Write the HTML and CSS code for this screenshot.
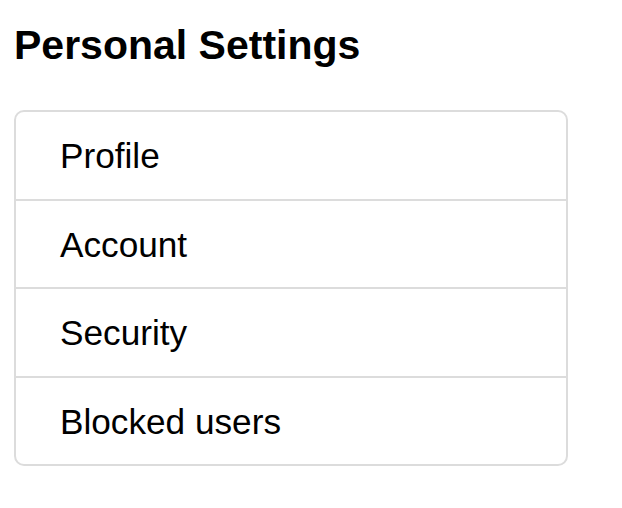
FILE: index.html
```html
<!DOCTYPE html>
<html lang="en">
<head>
<meta charset="utf-8">
<title>Personal Settings</title>
<link rel="stylesheet" href="styles.css">
</head>
<body>
  <main class="page">
    <h1 class="title">Personal Settings</h1>
    <ul class="menu">
      <li class="menu-item">Profile</li>
      <li class="menu-item">Account</li>
      <li class="menu-item">Security</li>
      <li class="menu-item">Blocked users</li>
    </ul>
  </main>
</body>
</html>
```

FILE: styles.css
```css
html, body {
  margin: 0;
  padding: 0;
  background: #ffffff;
}

body {
  font-family: "Liberation Sans", Arial, Helvetica, sans-serif;
  color: #000000;
}

.page {
  padding: 22px 0 0 14px;
}

.title {
  margin: 0 0 41px 0;
  font-size: 41px;
  font-weight: bold;
  line-height: 47px;
}

.menu {
  list-style: none;
  margin: 0;
  padding: 0;
  width: 550px;
  border: 2px solid #dcdcdc;
  border-radius: 10px;
}

.menu-item {
  display: flex;
  align-items: center;
  height: 86.5px;
  padding: 2px 0 0 44px;
  font-size: 35.2px;
  box-sizing: border-box;
}

.menu-item + .menu-item {
  border-top: 2px solid #dcdcdc;
  height: 88.5px;
}
```
